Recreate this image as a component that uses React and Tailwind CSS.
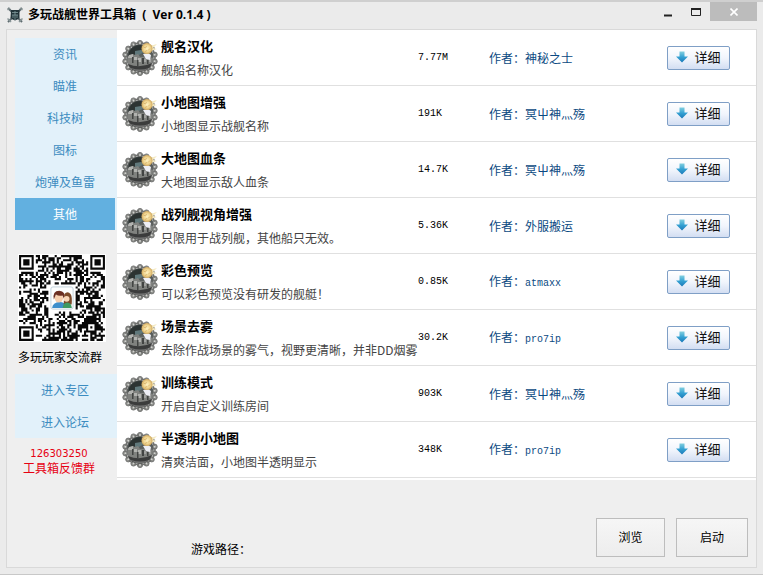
import { useState } from 'react';

const NAV_ITEMS = ['资讯', '瞄准', '科技树', '图标', '炮弹及鱼雷', '其他'];

const MODS = [
  { name: '舰名汉化', desc: '舰船名称汉化', size: '7.77M', author: '神秘之士' },
  { name: '小地图增强', desc: '小地图显示战舰名称', size: '191K', author: '冥屮神灬殇' },
  { name: '大地图血条', desc: '大地图显示敌人血条', size: '14.7K', author: '冥屮神灬殇' },
  { name: '战列舰视角增强', desc: '只限用于战列舰，其他船只无效。', size: '5.36K', author: '外服搬运' },
  { name: '彩色预览', desc: '可以彩色预览没有研发的舰艇！', size: '0.85K', author: 'atmaxx', latin: true },
  { name: '场景去雾', desc: '去除作战场景的雾气，视野更清晰，并非DD烟雾', size: '30.2K', author: 'pro7ip', latin: true },
  { name: '训练模式', desc: '开启自定义训练房间', size: '903K', author: '冥屮神灬殇' },
  { name: '半透明小地图', desc: '清爽洁面，小地图半透明显示', size: '348K', author: 'pro7ip', latin: true },
];

// QR grid: finder patterns, alignment mark and pseudo random modules
const QR_SIZE = 41;

const inFinder = (x, y) => {
  const corners = [[0, 0], [QR_SIZE - 7, 0], [0, QR_SIZE - 7]];
  for (const [cx, cy] of corners) {
    const dx = x - cx;
    const dy = y - cy;
    if (dx >= -1 && dx <= 7 && dy >= -1 && dy <= 7) {
      const ring = Math.max(Math.abs(dx - 3), Math.abs(dy - 3));
      return ring === 3 || ring <= 1;
    }
  }
  const ring = Math.max(Math.abs(x - 34), Math.abs(y - 34));
  if (ring <= 2) return ring !== 1;
  return null;
};

const buildQrPath = () => {
  let seed = 20150;
  let path = '';
  for (let y = 0; y < QR_SIZE; y++) {
    for (let x = 0; x < QR_SIZE; x++) {
      seed = (seed * 48271) % 2147483647;
      const fixed = inFinder(x, y);
      const centre = Math.abs(x - 20) <= 6 && Math.abs(y - 20) <= 6;
      const dark = fixed === null ? !centre && seed / 2147483647 > 0.44 : fixed;
      if (dark) path += `M${x} ${y}h1v1h-1z`;
    }
  }
  return path;
};

const QR_PATH = buildQrPath();

const QrCode = () => (
  <svg className="h-[88px] w-[88px]" viewBox="-0.5 -0.5 42 42" role="img" aria-label="QR">
    <rect x="-0.5" y="-0.5" width="42" height="42" fill="#fff" />
    <path d={QR_PATH} fill="#080808" />
    <rect x="15.2" y="15.2" width="10.6" height="10.6" rx="1" fill="#fdfefe" stroke="#b9cbd6" strokeWidth=".4" />
    {/* man */}
    <path d="M15.8 25.3q.2-2.6 3.6-3 3.2.3 3.5 3z" fill="#3d8fcb" />
    <circle cx="19" cy="20.6" r="2" fill="#f6cfae" />
    <path d="M16.6 21.2q-.8-4.2 2.6-4.2 3.2.2 2.3 4l-.8-1.7q-1.8.4-3.1-.5z" fill="#6b2f22" />
    {/* woman */}
    <path d="M21.6 18.6q1.6-1.6 3 0 .9 1.4.5 5h-3.8z" fill="#7c4a2a" />
    <circle cx="22.7" cy="20.9" r="1.4" fill="#f8d6b8" />
    <path d="M20.8 25.3q.3-2.4 2.2-2.6 2 .2 2.2 2.6z" fill="#3f9a62" />
  </svg>
);

const AppLogo = () => (
  <svg className="h-4 w-4 shrink-0" viewBox="0 0 16 16" aria-hidden="true">
    <path d="M1 1l14 14M15 1L1 15" stroke="#5c6a6e" strokeWidth="2" />
    <path d="M.5 3l2.5-2M15.500 3L13 1M.5 11.500l3.500 3.500M15.500 11.500L12 15" stroke="#8b9799" strokeWidth="1.500" fill="none" />
    <path d="M4 3h8.500v7.500q-1 2-4.500 3-3.500-1-4.500-3z" fill="#22343a" />
    <path d="M5 5.500h6M5 8h6M8 4v9M6 8v3M10 8v3" stroke="#7f9a9c" strokeWidth=".8" />
  </svg>
);

// Gradients shared by all of the row icons
const IconDefs = () => (
  <svg className="absolute h-0 w-0" aria-hidden="true">
    <defs>
      <linearGradient id="ball" x1="0" y1="0" x2="0" y2="1">
        <stop offset="0" stopColor="#3f4544" />
        <stop offset=".4" stopColor="#5b5f5e" />
        <stop offset=".7" stopColor="#7b7d7c" />
        <stop offset="1" stopColor="#3a3b3b" />
      </linearGradient>
      <radialGradient id="flare">
        <stop offset="0" stopColor="#fff3c4" />
        <stop offset=".6" stopColor="#f0d590" />
        <stop offset="1" stopColor="#cfa75e" />
      </radialGradient>
      <linearGradient id="arrow" x1="0" y1="0" x2="0" y2="1">
        <stop offset="0" stopColor="#82cfdf" />
        <stop offset=".5" stopColor="#35a2d3" />
        <stop offset="1" stopColor="#1b78b8" />
      </linearGradient>
    </defs>
  </svg>
);

const LINKS = Array.from({ length: 14 }, (_, i) => {
  const angle = ((i + 0.5) * Math.PI) / 7;
  return [18 + 15 * Math.cos(angle), 18 + 15 * Math.sin(angle)];
});

const ModIcon = () => (
  <svg className="h-9 w-9 shrink-0" viewBox="0 0 36 36" aria-hidden="true">
    {LINKS.map(([x, y], i) => (
      <circle key={i} cx={x} cy={y} r="2.6" fill="#8f908d" stroke="#6a6b69" strokeWidth=".8" />
    ))}
    <circle cx="18" cy="18" r="15" fill="none" stroke="#6f706e" strokeWidth="1.4" />
    {LINKS.map(([x, y], i) => (
      <circle key={i} cx={x} cy={y} r="1" fill="#d2d3cf" />
    ))}
    <circle cx="18" cy="18" r="13.6" fill="url(#ball)" />
    {/* sky and deck */}
    <path d="M7 12q4-7 12-7l2 4-4 3-3 4-8 1z" fill="#2c3332" />
    <path d="M13 11l6-1 3 2-5 3-4 0z" fill="#60787b" />
    <path d="M6 16l5-2 2 1 3-1 2 3 5 0 8 1q0 5-4 8l-18 1q-5-4-3-11z" fill="#80827f" />
    <path d="M7 15l4-1v4H6zM12 17h3v3h-3zM16 18h3v4h-3z" fill="#b2b3b0" />
    <path d="M10 17h1.500v6H10zM15 20h1.500v6H15zM20 18h2v6h-2zM25 20h1.500v4H25z" fill="#424443" />
    <path d="M22 19h2v3h-2zM27 19h2v3h-2z" fill="#a0a19f" />
    {/* hull shade */}
    <path d="M6 24q12 5 24-1-3 8.500-12 8.500T6 24z" fill="#3b3c3c" />
    <path d="M9 28q9 3 18 0-4 3.500-9 3.500T9 28z" fill="#707170" />
    {/* glare */}
    <path d="M21 14l5-1 3 2-1 5-4-1z" fill="#eeeff6" />
    <path d="M28 6l7-2-4 4 4 1-6 2z" fill="#f5eac2" />
    <circle cx="25" cy="8.500" r="5.500" fill="url(#flare)" />
    <path d="M21.500 7l2 1 1-2M26 10.500l2-2M23 11.500l2-1" stroke="#c99f58" strokeWidth=".6" fill="none" />
  </svg>
);

const ModRow = ({ mod }) => (
  <li className="flex h-14 items-center border-b border-[#e0e0e0] pl-[5px] pr-[26px]">
    <ModIcon />
    <div className="ml-[3px] min-w-0 flex-1 whitespace-nowrap">
      <h2 className="text-[13px] font-bold leading-6 text-black">{mod.name}</h2>
      <p className="text-xs leading-6 text-[#444]">{mod.desc}</p>
    </div>
    <span className="w-[71px] shrink-0 font-['Liberation_Mono'] text-[10px] text-black">{mod.size}</span>
    <span className="w-[178px] shrink-0 text-xs text-[#0b4a82]">
      作者：
      <span className={mod.latin ? "font-['Liberation_Mono'] text-[10px]" : ''}>{mod.author}</span>
    </span>
    <button
      type="button"
      className="flex h-6 w-[63px] shrink-0 items-center justify-center gap-[6px] rounded-[2px] border border-[#7f9fc6] bg-gradient-to-b from-white via-[#f1f5fc] to-[#d3def2] pb-px text-[13px] text-[#111]"
    >
      <svg className="h-3 w-3" viewBox="0 0 12 12" aria-hidden="true">
        <path d="M3.5 0.5h5V5.5H12L6 11.5 0 5.5h3.5z" fill="url(#arrow)" />
      </svg>
      详细
    </button>
  </li>
);

const TitleBar = () => (
  <header className="flex h-7 items-start border-t-2 border-[#cfcfcf] pl-[7px] pr-[6px]">
    <div className="flex h-[26px] flex-1 items-center gap-[5px]">
      <AppLogo />
      <h1 className="whitespace-pre font-['Open_Sans','Noto_Sans_CJK_SC',sans-serif] text-xs font-bold text-black">
        多玩战舰世界工具箱{'  (  Ver 0.1.4 )'}
      </h1>
    </div>
    <button type="button" aria-label="最小化" className="flex h-5 w-7 items-center justify-center">
      <svg className="h-3 w-3" viewBox="0 0 12 12">
        <path d="M2 9.5h8" stroke="#222" strokeWidth="2" />
      </svg>
    </button>
    <button type="button" aria-label="最大化" className="flex h-5 w-7 items-center justify-center">
      <svg className="h-3 w-3" viewBox="0 0 12 12">
        <path d="M1.5 3.5h9v6h-9z" fill="none" stroke="#222" strokeWidth="1" />
        <path d="M1 3h10" stroke="#222" strokeWidth="2" />
      </svg>
    </button>
    <button type="button" aria-label="关闭" className="flex h-[19px] w-[47px] items-center justify-center bg-[#bcbcbc]">
      <svg className="h-2 w-2" viewBox="0 0 8 8">
        <path d="M.5.5l7 7M7.5.5l-7 7" stroke="#fff" strokeWidth="1.6" />
      </svg>
    </button>
  </header>
);

const Sidebar = ({ active, onSelect }) => (
  <aside className="w-[110px] shrink-0 pl-2 pt-2">
    <nav className="bg-[#e2f1fa]">
      {NAV_ITEMS.map(item => (
        <button
          key={item}
          type="button"
          onClick={() => onSelect(item)}
          className={`block h-8 w-[100px] text-xs ${
            item === active ? 'bg-[#62b0e0] text-white' : 'text-[#3c8cc0]'
          }`}
        >
          {item}
        </button>
      ))}
    </nav>
    <div className="mt-6 pl-[3px]">
      <QrCode />
      <p className="mt-[3px] whitespace-nowrap text-xs leading-6 text-black">多玩玩家交流群</p>
    </div>
    <div className="mt-[5px] bg-[#e2f1fa]">
      <a href="#zone" className="block w-[100px] text-center text-xs leading-8 text-[#3c8cc0]">进入专区</a>
      <a href="#forum" className="block w-[100px] text-center text-xs leading-8 text-[#3c8cc0]">进入论坛</a>
    </div>
    <p className="mt-[9px] pr-[14px] text-center text-xs leading-[14px] text-[#e60012]">
      <span className="block font-['DejaVu_Sans'] text-[10px] leading-[14px]">126303250</span>
      工具箱反馈群
    </p>
  </aside>
);

const App = () => {
  const [active, setActive] = useState('其他');

  return (
    <div className="min-h-screen bg-white font-['Noto_Sans_CJK_SC',sans-serif]">
      <IconDefs />
      <div className="border-b border-[#c8c8c8] bg-[#ebebeb] pb-[6px]">
        <TitleBar />
        <main className="ml-[6px] mr-[6px] mt-px border border-[#d9d9d9] bg-[#efefef]">
          <div className="flex">
            <Sidebar active={active} onSelect={setActive} />
            <ul className="min-w-0 flex-1 bg-white pb-[2px]">
              {MODS.map(mod => (
                <ModRow key={mod.name} mod={mod} />
              ))}
            </ul>
          </div>
          <footer className="flex items-end gap-[11px] pb-[10px] pl-[184px] pr-2 pt-[38px]">
            <p className="flex-1 text-xs leading-4 text-black">游戏路径：</p>
            <button
              type="button"
              className="h-[39px] w-[69px] border border-[#bdbdbd] bg-gradient-to-b from-[#f6f6f6] to-[#ededed] pb-px text-xs text-black"
            >
              浏览
            </button>
            <button
              type="button"
              className="h-[39px] w-[72px] border border-[#bdbdbd] bg-gradient-to-b from-[#f6f6f6] to-[#ededed] pb-px text-xs text-black"
            >
              启动
            </button>
          </footer>
        </main>
      </div>
    </div>
  );
};

export default App;
